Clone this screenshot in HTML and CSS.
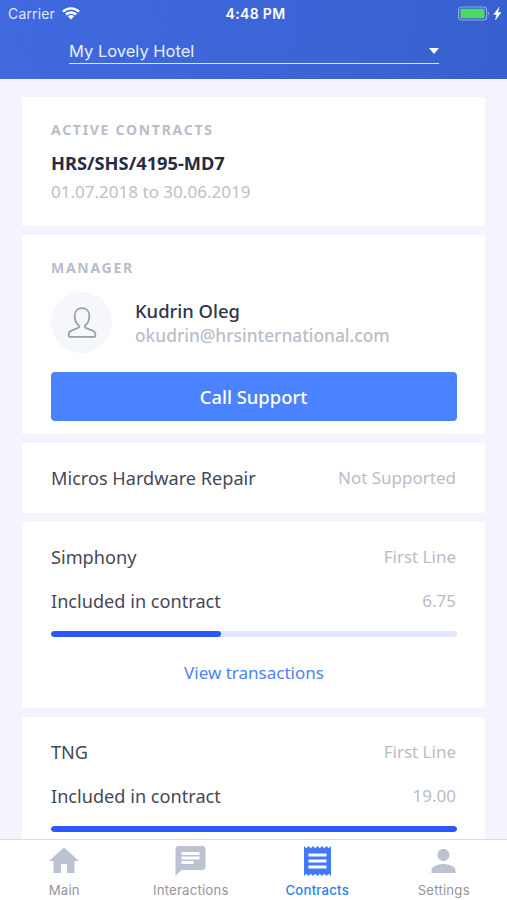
FILE: index.html
```html
<!DOCTYPE html>
<html lang="en">
<head>
<meta charset="utf-8">
<title>Contracts</title>
<link rel="stylesheet" href="styles.css">
</head>
<body>
<div class="app">
  <header class="header">
    <div class="status">
      <div class="status-left">
        <span class="carrier">Carrier</span>
        <svg class="wifi" width="18" height="13" viewBox="0 0 18 13"><g fill="none" stroke="#fff" stroke-width="2.4"><path d="M1 4.6C5.5.3 12.500.3 17 4.600"/><path d="M3.900 7.500c2.900-2.700 7.300-2.700 10.200 0"/></g><path fill="#fff" d="M5.900 9.300c1.800-1.600 4.400-1.600 6.200 0L9 12.500z"/></svg>
      </div>
      <span class="time">4:48 PM</span>
      <div class="status-right">
        <svg width="44" height="15" viewBox="0 0 44 15"><rect x=".6" y="1" width="28" height="13" rx="3" fill="none" stroke="#8fa7e8" stroke-width="1.200"/><rect x="2.500" y="2.800" width="24" height="9.400" rx="1.200" fill="#4cdb62"/><path d="M30 5.300q2.400 2.200 0 4.400z" fill="#8fa7e8"/><path d="M41.200 1.300 35.500 8.500h3.200l-1.300 5.500 5.700-7.500h-3.300z" fill="#fff" stroke="#fff" stroke-width=".4"/></svg>
      </div>
    </div>
    <div class="select"><span>My Lovely Hotel</span><i class="caret"></i></div>
  </header>

  <main class="content">
    <section class="card contract">
      <h2 class="label">ACTIVE CONTRACTS</h2>
      <p class="number">HRS/SHS/4195-MD7</p>
      <p class="dates">01.07.2018 to 30.06.2019</p>
    </section>

    <section class="card manager">
      <h2 class="label">MANAGER</h2>
      <div class="person">
        <div class="avatar">
          <svg width="30" height="32" viewBox="0 0 30 32"><path d="M15 1.200c-4.600 0-7.300 3.200-7.300 7.700 0 4.200 1.500 7.300 3.900 9.300.8.700.6 2.200-.3 2.600l-7.400 3.100C2.300 24.600 1.700 25.700 1.700 27v1.200c0 1.100.6 1.700 1.700 1.700h23.200c1.100 0 1.700-.6 1.700-1.700V27c0-1.300-.6-2.400-2.200-3.100l-7.400-3.100c-.9-.4-1.100-1.900-.3-2.600 2.400-2 3.900-5.100 3.900-9.300 0-4.500-2.700-7.700-7.300-7.700z" fill="none" stroke="#9c9fac" stroke-width="1.800"/></svg>
        </div>
        <div>
          <p class="name">Kudrin Oleg</p>
          <p class="email">okudrin@hrsinternational.com</p>
        </div>
      </div>
      <button class="call">Call Support</button>
    </section>

    <section class="card repair">
      <div class="row"><span>Micros Hardware Repair</span><span class="value">Not Supported</span></div>
    </section>

    <section class="card service">
      <div class="row"><span>Simphony</span><span class="value">First Line</span></div>
      <div class="row included"><span>Included in contract</span><span class="value">6.75</span></div>
      <div class="bar"><div class="fill" style="width:41.8%"></div></div>
      <a class="link">View transactions</a>
    </section>

    <section class="card service">
      <div class="row"><span>TNG</span><span class="value">First Line</span></div>
      <div class="row included"><span>Included in contract</span><span class="value">19.00</span></div>
      <div class="bar"><div class="fill" style="width:100%"></div></div>
    </section>
  </main>

  <nav class="tabs">
    <div class="tab">
      <svg width="36" height="36" viewBox="0 0 24 24"><path d="M10 20v-6h4v6h5v-8h3L12 3 2 12h3v8z"/></svg>
      <span>Main</span>
    </div>
    <div class="tab">
      <svg width="37" height="36" viewBox="0 0 24 24"><path d="M20 2H4c-1.100 0-1.990.9-1.990 2L2 22l4-4h14c1.100 0 2-.9 2-2V4c0-1.100-.9-2-2-2zM6 9h12v2H6V9zm8 5H6v-2h8v2zm4-6H6V6h12v2z"/></svg>
      <span>Interactions</span>
    </div>
    <div class="tab active">
      <svg width="37" height="36" viewBox="0 0 24 24"><path d="M18 17H6v-2h12v2zm0-4H6v-2h12v2zm0-4H6V7h12v2zM3 22l1.500-1.500L6 22l1.500-1.500L9 22l1.500-1.500L12 22l1.500-1.500L15 22l1.500-1.500L18 22l1.500-1.500L21 22V2l-1.500 1.500L18 2l-1.500 1.500L15 2l-1.500 1.500L12 2l-1.500 1.500L9 2 7.500 3.500 6 2 4.500 3.500 3 2v20z"/></svg>
      <span>Contracts</span>
    </div>
    <div class="tab">
      <svg width="37" height="36" viewBox="0 0 24 24"><path d="M12 12c2.210 0 4-1.790 4-4s-1.790-4-4-4-4 1.790-4 4 1.790 4 4 4zm0 2c-2.670 0-8 1.340-8 4v2h16v-2c0-2.660-5.330-4-8-4z"/></svg>
      <span>Settings</span>
    </div>
  </nav>
</div>
</body>
</html>
```
FILE: styles.css
```css
* { box-sizing: border-box; }
body, h2, p { margin: 0; }
body { font-family: "Noto Sans", sans-serif; color: #454857; }
.app { height: 900px; display: flex; flex-direction: column; overflow: hidden; background: #f3f4fd; }

.header { flex: none; height: 79px; background: linear-gradient(100deg, #4069e0, #3861cf); color: #fff; font-family: Inter, sans-serif; }
.status { display: grid; grid-template-columns: 1fr auto 1fr; align-items: center; height: 27px; padding: 0 5px 0 8px; }
.status-left { display: flex; align-items: center; gap: 7px; }
.carrier { font-size: 14px; letter-spacing: .15px; color: #dfe7fb; }
.time { font-size: 14px; font-weight: 600; letter-spacing: .35px; margin-left: 1px; }
.status-right { display: flex; justify-content: flex-end; }
.status-right svg, .wifi { display: block; }
.select { display: flex; align-items: center; justify-content: space-between; width: 370px; height: 37px; margin-left: 69px; padding-top: 12px; border-bottom: 1px solid #dce5fd; font-size: 16.500px; line-height: 24px; color: #e8eefd; }
.caret { border: 5.500px solid transparent; border-top: 6px solid #fff; border-bottom: 0; }

.content { flex: 1; min-height: 0; overflow: hidden; display: flex; flex-direction: column; gap: 9px; padding: 18px 22px 0; }
.card { flex: none; width: 463px; padding: 23px 28px 0 29px; background: #fff; border-radius: 2px; }
.label { font-size: 14px; line-height: 20px; font-weight: 700; letter-spacing: 1.720px; color: #b7bdca; }
.contract { height: 129px; }
.number { margin-top: 11px; font-size: 18.250px; line-height: 24px; font-weight: 700; color: #272b43; }
.dates { margin-top: 5px; font-size: 17.050px; line-height: 24px; color: #bcc0ca; }

.manager { height: 199px; }
.person { display: flex; gap: 23px; margin-top: 14px; }
.avatar { width: 61px; height: 61px; border-radius: 50%; background: #f6f7fb; display: flex; align-items: center; justify-content: center; }
.name { margin-top: 7px; font-size: 18.400px; line-height: 24px; font-weight: 500; color: #303349; }
.email { font-size: 17.330px; line-height: 25px; font-weight: 500; color: #b9beca; }
.call { display: block; width: 406px; height: 49px; margin-top: 19px; padding: 0 1px 0 0; border: 0; border-radius: 4px; background: #4b82ff; color: #fff; font: 500 18.400px/49px "Noto Sans", sans-serif; }

.row { display: flex; justify-content: space-between; align-items: center; height: 26px; font-size: 18.150px; line-height: 26px; }
.value { font-size: 17px; color: #b9bdc5; margin-right: 1px; }
.repair { height: 70px; padding-top: 22px; }
.service { height: 186px; padding-top: 22px; }
.included { margin-top: 18px; }
.bar { height: 6px; margin-top: 17px; border-radius: 3px; background: #e0e7fd; overflow: hidden; }
.fill { height: 6px; border-radius: 3px; background: #2b58fc; }
.link { display: block; margin-top: 23px; text-align: center; font-size: 17px; line-height: 26px; color: #4c83f4; }

.tabs { flex: none; display: grid; grid-template-columns: repeat(4, 1fr); height: 61px; padding: 0 0 0 1px; border-top: 1px solid #dcdde4; background: #fff; font-family: Inter, sans-serif; }
.tab { display: flex; flex-direction: column; align-items: center; padding-top: 3px; font-size: 13.200px; line-height: 18px; letter-spacing: .2px; color: #969699; }
.tab svg { display: block; fill: #bdc2d3; }
.tab span { margin-top: 2px; }
.active { color: #2a83f5; font-weight: 500; }
.active svg { fill: #4278fb; }
```
